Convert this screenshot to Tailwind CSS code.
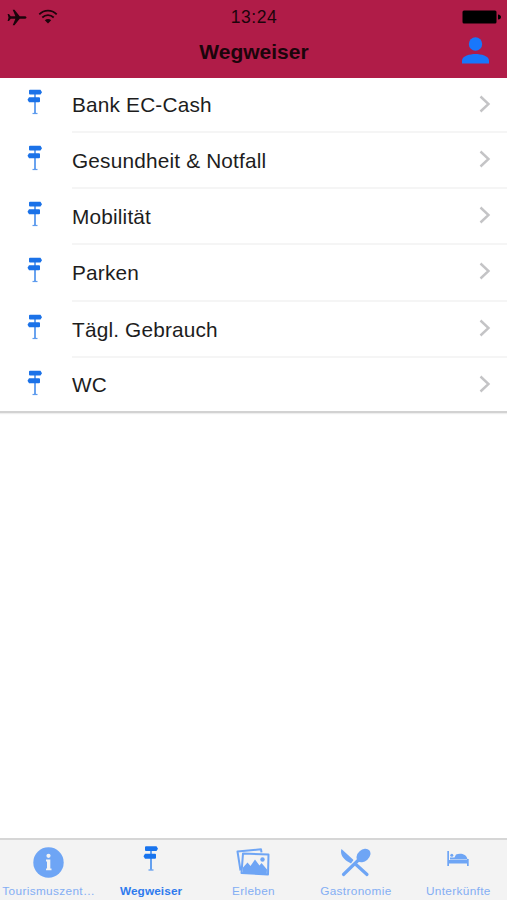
<!DOCTYPE html>
<html lang="de">
  <head>
    <meta charset="UTF-8" />
    <meta name="viewport" content="width=device-width, initial-scale=1.0" />
    <title>Wegweiser</title>
    <script src="https://cdn.jsdelivr.net/npm/@tailwindcss/browser@4"></script>
  </head>
  <body class="bg-white font-['Liberation_Sans',sans-serif]">
    <!-- Icons shared by the list and the tab bar -->
    <svg class="hidden">
      <symbol id="signpost" viewBox="0 0 16 26">
        <path d="M8 2v22" stroke="currentColor" stroke-width="2" opacity=".65" />
        <path d="M5.500 24.500h5" stroke="currentColor" stroke-width="1.200" opacity=".7" />
        <path
          d="M3 .8h10.500l1.500 2.400-1.500 2.400H3q-1 0-1-1V1.800q0-1 1-1zM2 8.200h10q1 0 1 1v3q0 1-1 1H2L.5 10.700z"
          fill="currentColor"
        />
      </symbol>
      <symbol id="chevron" viewBox="0 0 12 18">
        <path d="M1.500 1.500 9.500 9l-8 7.500" fill="none" stroke="currentColor" stroke-width="2.400" />
      </symbol>
    </svg>

    <div class="flex flex-col h-screen overflow-hidden">
      <header class="h-[78px] shrink-0 bg-[#b01c48] text-[#1c040b]">
        <!-- Status bar -->
        <div class="grid grid-cols-3 items-center h-[34px] pl-[7px] pr-[6px]">
          <div class="flex items-center gap-[11px]">
            <svg class="w-5 h-[17px]" viewBox="0 0 20 17" fill="currentColor">
              <path d="M19.500 8.500c0-.9-1-1.300-2.300-1.300h-4.500L7.500.7H5.700l2.700 6.500H3.700L2 5H.6l.9 3.500L.6 12H2l1.700-2.200h4.700l-2.700 6.500h1.800l5.200-6.500h4.500c1.300 0 2.300-.4 2.300-1.300z" />
            </svg>
            <svg class="w-5 h-[15px] -mt-[2px]" viewBox="0 0 20 15" fill="none" stroke="currentColor" stroke-width="1.800">
              <path d="M1.300 5.300c5-4.800 12.400-4.800 17.400 0M4.300 8.500c3.300-3.100 8.100-3.100 11.400 0" />
              <path d="m10 14.500-3.200-3.200c1.800-1.700 4.600-1.700 6.400 0z" fill="currentColor" stroke="none" />
            </svg>
          </div>
          <div class="text-center text-[17.500px] tracking-[0.5px] leading-none pt-px">13:24</div>
          <svg class="justify-self-end w-[39px] h-[14px]" viewBox="0 0 39 14" fill="#000">
            <rect x=".5" y=".5" width="34" height="13" rx="1.500" />
            <path d="M36 4.500q3 .5 3 2.500t-3 2.500z" />
          </svg>
        </div>
        <!-- Title bar -->
        <div class="grid grid-cols-3 items-center h-[34px] pr-[18px] pl-[19px]">
          <h1 class="col-start-2 text-center text-[21px] font-bold leading-none">Wegweiser</h1>
          <svg class="justify-self-end w-[27px] h-[27px] -mt-px" viewBox="0 0 27 27" fill="#1877fb">
            <circle cx="13.500" cy="7" r="6.700" />
            <path d="M0 26.500v-3c0-4.500 8-6.500 13.500-6.500S27 19 27 23.500v3z" />
          </svg>
        </div>
      </header>

      <main class="grow text-[20.800px] tracking-[0.18px] text-[#1d1d1d]">
        <ul class="border-b-2 border-[#d2d2d2] shadow-[0_1px_1px_#eeeeee]">
          <li class="flex h-[55px] pl-[27px]">
            <svg class="w-4 h-[26px] mr-[29px] mt-[11px] text-[#1b72e8]"><use href="#signpost" /></svg>
            <div class="flex grow items-center justify-between pr-4 pt-px border-b-2 border-[#f5f5f5]">
              <span>Bank EC-Cash</span>
              <svg class="w-3 h-[18px] -mt-[3px] text-[#c4c4c6]"><use href="#chevron" /></svg>
            </div>
          </li>
          <li class="flex h-[56.200px] pl-[27px]">
            <svg class="w-4 h-[26px] mr-[29px] mt-[12px] text-[#1b72e8]"><use href="#signpost" /></svg>
            <div class="flex grow items-center justify-between pr-4 pt-px border-b-2 border-[#f5f5f5]">
              <span>Gesundheit &amp; Notfall</span>
              <svg class="w-3 h-[18px] -mt-[3px] text-[#c4c4c6]"><use href="#chevron" /></svg>
            </div>
          </li>
          <li class="flex h-[56.200px] pl-[27px]">
            <svg class="w-4 h-[26px] mr-[29px] mt-[12px] text-[#1b72e8]"><use href="#signpost" /></svg>
            <div class="flex grow items-center justify-between pr-4 pt-px border-b-2 border-[#f5f5f5]">
              <span>Mobilität</span>
              <svg class="w-3 h-[18px] -mt-[3px] text-[#c4c4c6]"><use href="#chevron" /></svg>
            </div>
          </li>
          <li class="flex h-[56.200px] pl-[27px]">
            <svg class="w-4 h-[26px] mr-[29px] mt-[12px] text-[#1b72e8]"><use href="#signpost" /></svg>
            <div class="flex grow items-center justify-between pr-4 pt-px border-b-2 border-[#f5f5f5]">
              <span>Parken</span>
              <svg class="w-3 h-[18px] -mt-[3px] text-[#c4c4c6]"><use href="#chevron" /></svg>
            </div>
          </li>
          <li class="flex h-[56.200px] pl-[27px]">
            <svg class="w-4 h-[26px] mr-[29px] mt-[12px] text-[#1b72e8]"><use href="#signpost" /></svg>
            <div class="flex grow items-center justify-between pr-4 pt-px border-b-2 border-[#f5f5f5]">
              <span>Tägl. Gebrauch</span>
              <svg class="w-3 h-[18px] -mt-[3px] text-[#c4c4c6]"><use href="#chevron" /></svg>
            </div>
          </li>
          <li class="flex h-[53.500px] pl-[27px]">
            <svg class="w-4 h-[26px] mr-[29px] mt-[12px] text-[#1b72e8]"><use href="#signpost" /></svg>
            <div class="flex grow items-center justify-between pr-4 pt-px">
              <span>WC</span>
              <svg class="w-3 h-[18px] -mt-[2px] text-[#c4c4c6]"><use href="#chevron" /></svg>
            </div>
          </li>
        </ul>
      </main>

      <!-- Tab bar -->
      <nav class="h-[62px] shrink-0 bg-[#f3f3f3] border-t-2 border-[#d6d6d6] text-[11.800px] leading-[14px] tracking-[0.35px] text-[#83aef3]">
        <div class="grid grid-cols-5 -mx-[2.500px] text-center">
          <a class="flex flex-col items-center">
            <span class="flex h-[44px] items-center">
              <svg class="w-[31px] h-[31px]" viewBox="0 0 31 31">
                <circle cx="15.500" cy="15.500" r="15.200" fill="#6ea5f5" />
                <circle cx="15.500" cy="8.800" r="2.100" fill="#f3f3f3" />
                <path d="M13 12.500h4.300v9h1.200v1.800h-5.500v-1.800h1v-7h-1z" fill="#f3f3f3" />
              </svg>
            </span>
            <span class="whitespace-nowrap">Tourismuszent…</span>
          </a>
          <a class="flex flex-col items-center text-[#2f7bee]">
            <span class="flex h-[44px] items-start pt-[5px]">
              <svg class="w-4 h-[27px] text-[#1874ee]"><use href="#signpost" /></svg>
            </span>
            <span class="font-bold tracking-[0.1px]">Wegweiser</span>
          </a>
          <a class="flex flex-col items-center">
            <span class="flex h-[44px] items-center">
              <svg class="w-[34px] h-[28px]" viewBox="0 0 34 28" fill="none" stroke="#6ea5f5" stroke-width="2">
                <path d="M4.500 22.500 1.500 3.500 25 1.300l.5 3" stroke-linejoin="round" />
                <path d="M7 5.500 32.500 6.500 32 26.500 5.500 25z" stroke-linejoin="round" />
                <path d="m6.500 25 .5-5.500 4.500-5 3 3.500 4.500-6.500 4.500 6 2-2.500 5.500 6.500-.3 5z" fill="#6ea5f5" stroke="none" />
                <circle cx="26.500" cy="11.500" r="2.200" fill="#6ea5f5" stroke="none" />
              </svg>
            </span>
            <span>Erleben</span>
          </a>
          <a class="flex flex-col items-center">
            <span class="flex h-[44px] items-center">
              <svg class="w-[31px] h-[29px]" viewBox="0 0 31 29" fill="#6ea5f5">
                <path d="M1.500 1 13.500 12 11 15.500 8.500 14C4 11.500-.5 6.500 1.500 1z" />
                <path d="m16.500 17 10.500 9.500" stroke="#6ea5f5" stroke-width="3.200" stroke-linecap="round" />
                <path d="M3.500 26.500 19 11.500" stroke="#6ea5f5" stroke-width="3.200" stroke-linecap="round" />
                <ellipse cx="23.500" cy="7.500" rx="7.800" ry="5.800" transform="rotate(-42 23.500 7.500)" />
              </svg>
            </span>
            <span>Gastronomie</span>
          </a>
          <a class="flex flex-col items-center">
            <span class="flex h-[44px] items-start pt-[10px]">
              <svg class="w-[22px] h-[17px]" viewBox="0 0 22 17" fill="#6ea5f5">
                <path d="M.3 1H2v9h18V9h1.700v7H20v-2.500H2V16H.3z" />
                <circle cx="4.800" cy="5.300" r="1.500" />
                <path d="M3 7.500h4.500L9 4.500c4-1.500 10.500-1 11.500 5H3z" />
              </svg>
            </span>
            <span>Unterkünfte</span>
          </a>
        </div>
      </nav>
    </div>
  </body>
</html>
